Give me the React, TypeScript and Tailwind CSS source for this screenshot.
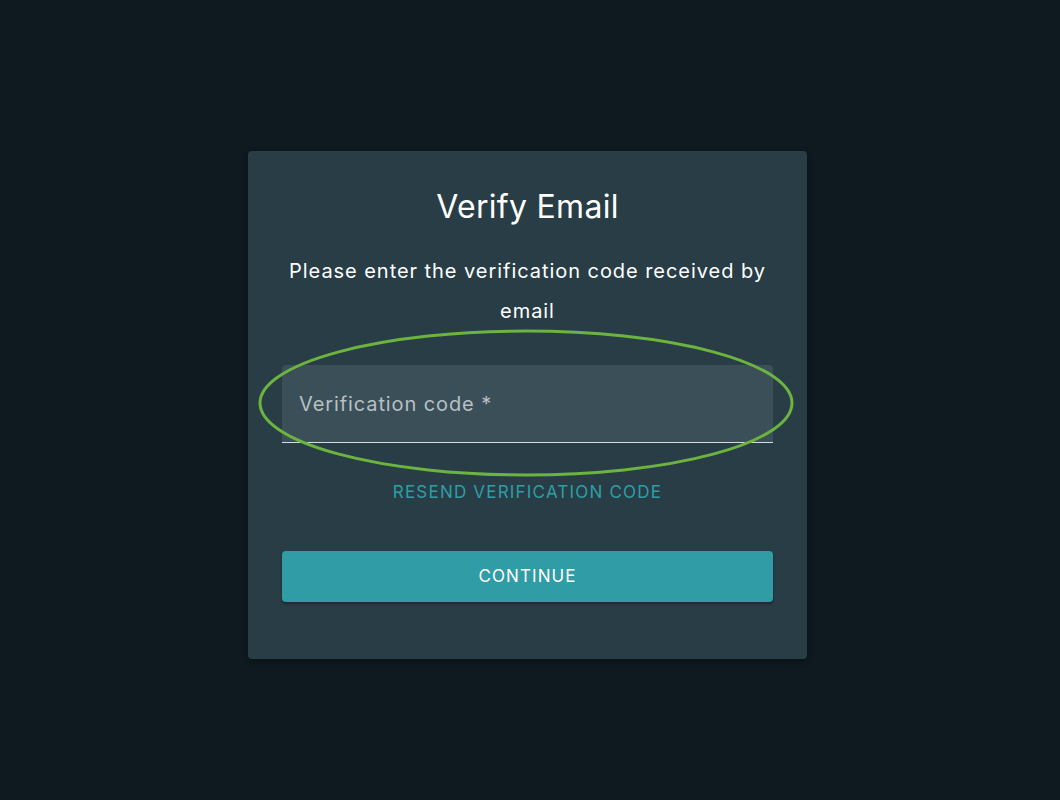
import React from "react";

export default function App() {
  return (
    <div
      className="min-h-[800px] w-full bg-[#0e1a20] flex justify-center pt-[151px]"
      style={{ fontFamily: "Inter, 'Noto Sans', sans-serif" }}
    >
      <div className="relative w-[559px] h-[508px] mr-[5px] bg-[#283d46] rounded-[4px] px-[34px] pt-[36px] flex flex-col items-center shadow-[0_2px_6px_rgba(0,0,0,0.4)]">
        <h1 className="text-[32px] leading-[40px] text-white font-normal text-center tracking-[0.3px]">Verify Email</h1>
        <p className="mt-[24px] text-[20px] leading-[40px] text-white text-center tracking-[0.95px]">
          Please enter the verification code received by email
        </p>
        <div className="relative mt-[34px] w-full">
          <div className="h-[78px] w-full bg-[#3a4f58] rounded-t-[4px] border-b border-[#d5dadc] flex items-center pl-[17px]">
            <span className="text-[20px] text-[#b7c0c4] tracking-[0.9px]">Verification code *</span>
          </div>
          <svg
            className="absolute pointer-events-none"
            style={{ left: -24, top: -36, width: 540, height: 152 }}
            viewBox="0 0 540 152"
          >
            <ellipse cx="268" cy="74" rx="266" ry="72" fill="none" stroke="#6cb33f" strokeWidth="3" />
          </svg>
        </div>
        <button className="mt-[37px] text-[17px] leading-[24px] text-[#2f9ea7] uppercase tracking-[1.2px]">
          Resend verification code
        </button>
        <button className="mt-[47px] w-full h-[51px] rounded-[4px] bg-[#309ca5] text-white text-[17px] uppercase tracking-[1.1px] shadow-[0_2px_3px_rgba(0,0,0,0.35)]">
          Continue
        </button>
      </div>
    </div>
  );
}
